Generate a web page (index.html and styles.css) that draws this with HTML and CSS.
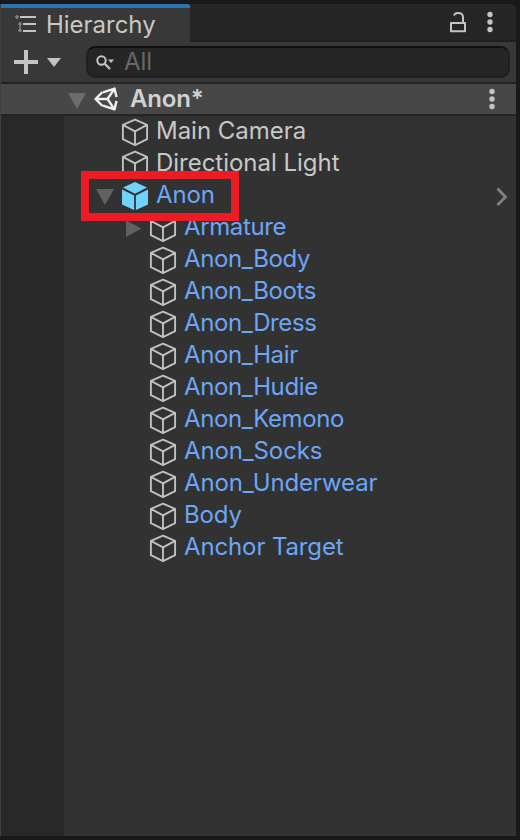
FILE: index.html
```html
<!DOCTYPE html>
<html lang="en">
<head>
<meta charset="utf-8">
<title>Hierarchy</title>
<link rel="stylesheet" href="styles.css">
</head>
<body>
<svg class="defs" width="0" height="0">
  <symbol id="cube" viewBox="0 0 30 32">
    <path d="M15 3.6 27.1 8.9V23.2L15 29.1 2.9 23.2V8.9ZM2.9 8.9 15 15.4 27.1 8.9M15 15.4V29.1" fill="none" stroke="#c0c0c0" stroke-width="1.9" stroke-linejoin="round"/>
  </symbol>
  <symbol id="prefab" viewBox="0 0 30 32">
    <path d="M15 2 27 7.6 15 13.8 3 7.6ZM2 9.5 14.1 15.6V30L2 24.5ZM28 9.5 15.9 15.6V30L28 24.5Z" fill="#6fd3fb"/>
  </symbol>
  <symbol id="dots" viewBox="0 0 6 22">
    <g fill="#c4c4c4"><circle cx="3" cy="3.5" r="2.7"/><circle cx="3" cy="11" r="2.7"/><circle cx="3" cy="18.5" r="2.7"/></g>
  </symbol>
</svg>
<main class="panel">
  <header class="tabs">
    <div class="tab">
      <svg class="list-icon" width="22" height="18" viewBox="0 0 22 18"><path d="M5 2H21M8 9H21M8 16H21" stroke="#c4c4c4" stroke-width="2"/><path d="M0 2H4M2 0V4M5 7V17M3 9H7M3 15.5H7" stroke="#858585" stroke-width="1.6"/></svg>
      <span>Hierarchy</span>
    </div>
    <div class="tab-actions">
      <svg width="16" height="22" viewBox="0 0 16 22"><path d="M1 12H15V20.2H1ZM13 12V6.5C13 .8 5 .8 4 4.6" fill="none" stroke="#c4c4c4" stroke-width="2" stroke-linejoin="round"/></svg>
      <svg width="6" height="22"><use href="#dots"/></svg>
    </div>
  </header>
  <div class="toolbar">
    <svg width="24" height="24" viewBox="0 0 24 24"><path d="M0 12H24M12 0V24" stroke="#c4c4c4" stroke-width="4"/></svg>
    <svg class="drop" width="14" height="9" viewBox="0 0 14 9"><path d="M0 0H14L7 9Z" fill="#c4c4c4"/></svg>
    <div class="search">
      <svg width="19" height="16" viewBox="0 0 19 16"><circle cx="5.5" cy="6.5" r="4.2" fill="none" stroke="#c4c4c4" stroke-width="2"/><path d="M8.5 9.5 14 15" stroke="#c4c4c4" stroke-width="2.4"/><path d="M12 5.5H18L15 9Z" fill="#c4c4c4"/></svg>
      <span>All</span>
    </div>
  </div>
  <div class="scene">
    <svg class="scene-arrow" width="18" height="16" viewBox="0 0 18 16"><path d="M0 0H18L9 16Z" fill="#6b6b6b"/></svg>
    <svg class="unity" width="24" height="24" viewBox="0 0 24 24"><path d="M9 5.3 20.5 1.6 22.5 10M22.5 14 20.5 22.4 9 18.7M8.5 5 1.5 12 8.5 19M1.5 12H13.5L20.5 1.6M13.5 12 20.5 22.4" fill="none" stroke="#f0f0f0" stroke-width="2.4" stroke-linejoin="round"/></svg>
    <strong>Anon*</strong>
    <svg class="scene-dots" width="6" height="22"><use href="#dots"/></svg>
  </div>
  <div class="body">
    <div class="tree">
      <div class="row"><i class="arrow"></i><svg class="cube"><use href="#cube"/></svg><span>Main Camera</span></div>
      <div class="row"><i class="arrow"></i><svg class="cube"><use href="#cube"/></svg><span>Directional Light</span></div>
      <div class="row linked"><svg class="arrow" viewBox="0 0 28 32"><path d="M4 9H22L13 25Z" fill="#616161"/></svg><svg class="cube"><use href="#prefab"/></svg><span>Anon</span><svg class="open" width="12" height="20" viewBox="0 0 12 20"><path d="M1.5 2.5 9.5 11 1.5 19" fill="none" stroke="#808080" stroke-width="2.8"/></svg></div>
      <div class="row child linked mesh"><svg class="arrow" viewBox="0 0 28 32"><path d="M6 8.5V25L21.5 16.5Z" fill="#616161"/></svg><svg class="cube"><use href="#cube"/></svg><span>Armature</span></div>
      <div class="row child linked mesh"><i class="arrow"></i><svg class="cube"><use href="#cube"/></svg><span>Anon_Body</span></div>
      <div class="row child linked mesh"><i class="arrow"></i><svg class="cube"><use href="#cube"/></svg><span>Anon_Boots</span></div>
      <div class="row child linked mesh"><i class="arrow"></i><svg class="cube"><use href="#cube"/></svg><span>Anon_Dress</span></div>
      <div class="row child linked mesh"><i class="arrow"></i><svg class="cube"><use href="#cube"/></svg><span>Anon_Hair</span></div>
      <div class="row child linked mesh"><i class="arrow"></i><svg class="cube"><use href="#cube"/></svg><span>Anon_Hudie</span></div>
      <div class="row child linked mesh"><i class="arrow"></i><svg class="cube"><use href="#cube"/></svg><span>Anon_Kemono</span></div>
      <div class="row child linked"><i class="arrow"></i><svg class="cube"><use href="#cube"/></svg><span>Anon_Socks</span></div>
      <div class="row child linked"><i class="arrow"></i><svg class="cube"><use href="#cube"/></svg><span>Anon_Underwear</span></div>
      <div class="row child linked"><i class="arrow"></i><svg class="cube"><use href="#cube"/></svg><span>Body</span></div>
      <div class="row child linked"><i class="arrow"></i><svg class="cube"><use href="#cube"/></svg><span>Anchor Target</span></div>
      <div class="highlight"></div>
    </div>
  </div>
</main>
</body>
</html>
```
FILE: styles.css
```css
* { box-sizing: border-box; }
body {
  margin: 0;
  height: 840px;
  padding: 4px 4px 4px 0;
  background: #191919;
  font: 24px/30px Inter, sans-serif;
  letter-spacing: -0.02px;
  color: #c8c8c8;
  overflow: hidden;
}
svg { display: block; flex: none; }
.defs { position: absolute; }
.panel {
  height: 832px;
  display: flex;
  flex-direction: column;
  background: #383838;
  border-left: 1px solid #404040;
  border-radius: 0 6px 0 0;
  overflow: hidden;
}
.tabs {
  height: 38px;
  display: flex;
  justify-content: space-between;
  background: #262626;
  border-bottom: 2px solid #202020;
}
.tab {
  width: 190px;
  height: 38px;
  display: flex;
  align-items: center;
  padding: 0 0 0 14px;
  gap: 9px;
  background: #383838;
  border-top: 4px solid #2c72b5;
  border-right: 1px solid #222;
  border-radius: 0 4px 0 0;
}
.list-icon { margin-bottom: 3px; }
.tab-actions {
  display: flex;
  align-items: center;
  gap: 21px;
  padding: 0 23px 0 0;
}
.toolbar {
  height: 42px;
  display: flex;
  align-items: center;
  padding: 0 6px 0 13px;
  border-bottom: 2px solid #232323;
}
.drop { margin-left: 9px; }
.search {
  flex: 1;
  height: 32px;
  margin-left: 25px;
  display: flex;
  align-items: center;
  gap: 9px;
  padding-left: 8px;
  background: #262626;
  border: 2px solid #202020;
  border-top-color: #111;
  border-radius: 9px;
  color: #686868;
}
.scene {
  height: 32px;
  display: flex;
  align-items: center;
  padding: 0 21px 0 67px;
  background: #474747;
  border-bottom: 2px solid #242424;
}
.scene-arrow { margin-top: 3px; }
.unity { margin-left: 8px; }
.scene strong { flex: 1; margin-left: 12px; font-weight: 600; letter-spacing: -0.2px; color: #d2d2d2; }
.body {
  flex: 1;
  padding-left: 63px;
  background: #282828;
}
.tree { position: relative; height: 100%; background: #323232; }
.row {
  height: 32px;
  display: flex;
  align-items: center;
  padding-left: 28px;
}
.child { padding-left: 56px; }
.linked { color: #6ca6f5; letter-spacing: -0.13px; }
.mesh { letter-spacing: -0.38px; }
.row span { margin: 0 auto 2px 6px; }
.arrow { width: 28px; height: 32px; }
.cube { width: 30px; height: 32px; }
.open { margin-right: 8px; }
.highlight {
  position: absolute;
  left: 17px;
  top: 55px;
  width: 158px;
  height: 50px;
  border: 8px solid #ed1c24;
}
```
